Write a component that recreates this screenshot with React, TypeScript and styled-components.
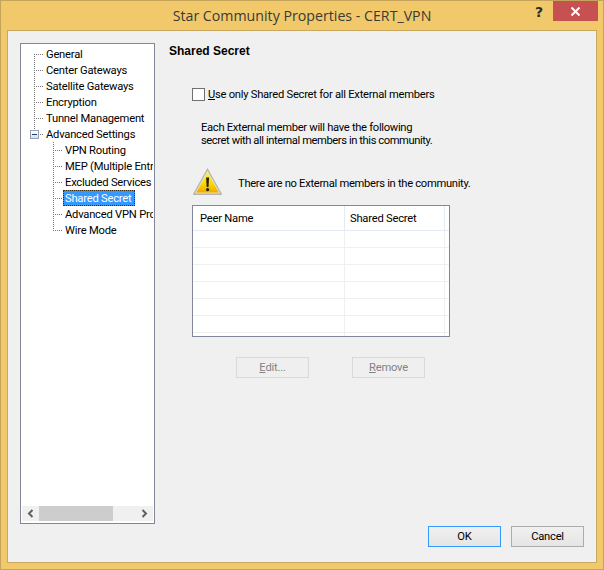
import React from "react";
import styled, { createGlobalStyle } from "styled-components";

const uiFont = `"Roboto", "Liberation Sans", Arial, sans-serif`;

const Global = createGlobalStyle`
  html, body { margin: 0; padding: 0; background: #f1c96b; }
  body { font-family: ${uiFont}; font-size: 11.2px; letter-spacing: -0.22px; color: #000; }
`;

const Frame = styled.div`
  box-sizing: border-box; width: 604px; height: 570px; display: flex; flex-direction: column;
  background: #f1c96b; border: 1px solid #c4a45b;
`;
const TitleBar = styled.div`
  height: 29px; flex: none; display: flex; align-items: flex-start; position: relative;
`;
const Title = styled.div`
  flex: 1; text-align: center; font-family: "Open Sans", sans-serif; font-size: 14.2px; letter-spacing: 0; line-height: 29px; color: #3a3a36;
`;
const Help = styled.div`
  position: absolute; right: 60px; top: 3px; font: bold 14px/16px "DejaVu Sans", sans-serif; letter-spacing: 0; color: #2b2b2b;
`;
const Close = styled.div`
  position: absolute; right: 5px; top: 0; width: 45px; height: 20px; background: #c75050; display: flex; align-items: center; justify-content: center;
`;
const Client = styled.div`
  flex: 1; margin: 0 6px 6px; background: #f0f0f0; border: 1px solid #c9a85f; padding: 12px 12px 15px;
  display: flex; gap: 14px; min-height: 0;
`;
const Tree = styled.div`
  box-sizing: border-box; width: 135px; height: 481px; background: #fff; border: 1px solid #82879a;
  display: flex; flex-direction: column; padding: 2px 1px 1px; flex: none;
`;
const TreeList = styled.div`flex: 1; overflow: hidden;`;
const Row = styled.div<{ $level: number }>`
  height: 16px; display: flex; align-items: center; white-space: nowrap; padding-left: ${p => (p.$level ? 31 : 12)}px;
`;
const Connector = styled.span<{ $last?: boolean; $top?: boolean }>`
  flex: none; width: 10px; height: 16px; display: flex; align-items: center;
  background-image:
    repeating-linear-gradient(to bottom, #777 0 1px, transparent 1px 2px),
    repeating-linear-gradient(to right, #777 0 1px, transparent 1px 2px);
  background-repeat: no-repeat;
  background-size: 1px ${p => (p.$last ? 8 : 16)}px, 10px 1px;
  background-position: 0 ${p => (p.$top ? 8 : 0)}px, 0 8px;
`;
const Expander = styled.span`
  box-sizing: border-box; width: 9px; height: 9px; margin-left: -4px; border: 1px solid #98a2b3;
  background: linear-gradient(#fff, #d8dde6); display: flex; align-items: center; justify-content: center;
  &::after { content: ""; width: 5px; height: 1px; background: #1f3f7a; }
`;
const Label = styled.span<{ $selected?: boolean }>`
  box-sizing: border-box; height: 16px; line-height: 16px; padding: 0 3px 0 1px;
  border: 1px ${p => (p.$selected ? "dotted #3b2a10" : "solid transparent")};
  background: ${p => (p.$selected ? "#3399ff" : "transparent")};
  color: ${p => (p.$selected ? "#fff" : "#000")};
`;
const HScroll = styled.div`
  height: 15px; flex: none; background: #f0f0f0; display: flex; align-items: center; margin-bottom: 1px;
`;
const Arrow = styled.span`
  width: 17px; height: 15px; flex: none; display: flex; align-items: center; justify-content: center;
`;
const Thumb = styled.div`width: 74px; height: 15px; background: #cdcdcd;`;
const Spacer = styled.div`flex: 1;`;

const Panel = styled.div`flex: 1; display: flex; flex-direction: column; min-width: 0;`;
const Heading = styled.div`
  font-family: "Liberation Sans", sans-serif; font-size: 12px; letter-spacing: 0; font-weight: bold; line-height: 14px; padding-top: 1px;
`;
const CheckRow = styled.label`
  display: flex; align-items: center; height: 12px; margin: 30px 0 0 23px; gap: 3px; letter-spacing: -0.26px;
`;
const CheckBox = styled.span`
  box-sizing: border-box; width: 13px; height: 13px; background: #fff; border: 1px solid #707070; flex: none;
`;
const Para = styled.div`margin: 21px 0 0 32px;`;
const ParaLine = styled.div<{ $tight: number }>`
  line-height: 13px; white-space: nowrap; letter-spacing: ${p => p.$tight}px;
`;
const WarnRow = styled.div`
  display: flex; align-items: flex-start; gap: 15px; margin: 20px 0 0 23px; height: 32px; letter-spacing: -0.3px;
`;
const WarnText = styled.span`line-height: 34px;`;
const Table = styled.div`
  box-sizing: border-box; margin: 6px 0 0 23px; width: 258px; height: 132px; overflow: hidden;
  background: #fff; border: 1px solid #82879a;
`;
const TRow = styled.div<{ $head?: boolean }>`
  display: grid; grid-template-columns: 152px 100px 1fr; height: ${p => (p.$head ? 25 : 17)}px; box-sizing: border-box;
  border-bottom: 1px solid ${p => (p.$head ? "#e3e9f5" : "#efefef")};
`;
const TCell = styled.div<{ $head?: boolean }>`
  border-right: 1px solid ${p => (p.$head ? "#e3e9f5" : "#efefef")};
  padding-left: 5px; line-height: 26px; overflow: hidden;
  &:first-child { padding-left: 7px; }
  &:last-child { border-right: 0; }
`;
const ActionBar = styled.div`display: flex; gap: 43px; margin: 20px 0 0 67px;`;
const DisabledButton = styled.button`
  box-sizing: border-box; width: 73px; height: 21px; padding: 0; background: #efefef; border: 1px solid #d9d9d9;
  font: 11.2px ${uiFont}; letter-spacing: -0.22px; color: #838383;
`;
const Footer = styled.div`margin-top: auto; display: flex; justify-content: flex-end; gap: 10px;`;
const DialogButton = styled.button<{ $default?: boolean }>`
  box-sizing: border-box; width: 73px; height: 21px; padding: 0;
  background: linear-gradient(#f0f0f0, #e5e5e5); border: 1px solid ${p => (p.$default ? "#3399ff" : "#acacac")};
  font: 11.2px ${uiFont}; letter-spacing: -0.22px; color: #000;
`;

const items: { t: string; level: number; last?: boolean; top?: boolean; exp?: boolean; sel?: boolean }[] = [
  { t: "General", level: 0, top: true },
  { t: "Center Gateways", level: 0 },
  { t: "Satellite Gateways", level: 0 },
  { t: "Encryption", level: 0 },
  { t: "Tunnel Management", level: 0 },
  { t: "Advanced Settings", level: 0, last: true, exp: true },
  { t: "VPN Routing", level: 1 },
  { t: "MEP (Multiple Entry Point)", level: 1 },
  { t: "Excluded Services", level: 1 },
  { t: "Shared Secret", level: 1, sel: true },
  { t: "Advanced VPN Properties", level: 1 },
  { t: "Wire Mode", level: 1, last: true },
];

const Warning = () => (
  <svg width="31" height="29" viewBox="0 0 31 29">
    <defs>
      <linearGradient id="y" x1="0" y1="0" x2="0" y2="1">
        <stop offset="0" stopColor="#fff04a" /><stop offset="0.55" stopColor="#ffd800" /><stop offset="1" stopColor="#eda800" />
      </linearGradient>
    </defs>
    <path d="M15.5 1 L30 27 Q30.4 28 29.2 28 L1.8 28 Q0.6 28 1 27 Z" fill="#b4b4b4" />
    <path d="M15.5 4.5 L27.5 26 L3.5 26 Z" fill="url(#y)" stroke="#f4efc8" strokeWidth="0.8" strokeLinejoin="round" />
    <path d="M14.1 10.5 h3 l-.6 9.5 h-1.8 Z" fill="#1f1f16" />
    <circle cx="15.6" cy="22.6" r="1.6" fill="#1f1f16" />
  </svg>
);

export default function App() {
  return (
    <>
      <Global />
      <Frame>
        <TitleBar>
          <Title>Star Community Properties - CERT_VPN</Title>
          <Help>?</Help>
          <Close>
            <svg width="11" height="9" viewBox="0 0 11 9"><path d="M1.5 0.5 L9.5 8.5 M9.5 0.5 L1.5 8.5" stroke="#fff" strokeWidth="2" /></svg>
          </Close>
        </TitleBar>
        <Client>
          <Tree>
            <TreeList>
              {items.map(i => (
                <Row key={i.t} $level={i.level}>
                  <Connector $last={i.last || i.top} $top={i.top}>{i.exp && <Expander />}</Connector>
                  <Label $selected={i.sel}>{i.t}</Label>
                </Row>
              ))}
            </TreeList>
            <HScroll>
              <Arrow><svg width="7" height="9" viewBox="0 0 7 9"><path d="M5.5 1 L2 4.5 L5.5 8" fill="none" stroke="#606060" strokeWidth="2" /></svg></Arrow>
              <Thumb />
              <Spacer />
              <Arrow><svg width="7" height="9" viewBox="0 0 7 9"><path d="M1.5 1 L5 4.5 L1.5 8" fill="none" stroke="#606060" strokeWidth="2" /></svg></Arrow>
            </HScroll>
          </Tree>
          <Panel>
            <Heading>Shared Secret</Heading>
            <CheckRow><CheckBox /><span><u>U</u>se only Shared Secret for all External members</span></CheckRow>
            <Para>
              <ParaLine $tight={-0.3}>Each External member will have the following</ParaLine>
              <ParaLine $tight={-0.42}>secret with all internal members in this community.</ParaLine>
            </Para>
            <WarnRow><Warning /><WarnText>There are no External members in the community.</WarnText></WarnRow>
            <Table>
              <TRow $head><TCell $head>Peer Name</TCell><TCell $head>Shared Secret</TCell><TCell $head /></TRow>
              {[0, 1, 2, 3, 4, 5, 6].map(n => (
                <TRow key={n}><TCell /><TCell /><TCell /></TRow>
              ))}
            </Table>
            <ActionBar>
              <DisabledButton disabled><u>E</u>dit...</DisabledButton>
              <DisabledButton disabled><u>R</u>emove</DisabledButton>
            </ActionBar>
            <Footer>
              <DialogButton $default>OK</DialogButton>
              <DialogButton>Cancel</DialogButton>
            </Footer>
          </Panel>
        </Client>
      </Frame>
    </>
  );
}
